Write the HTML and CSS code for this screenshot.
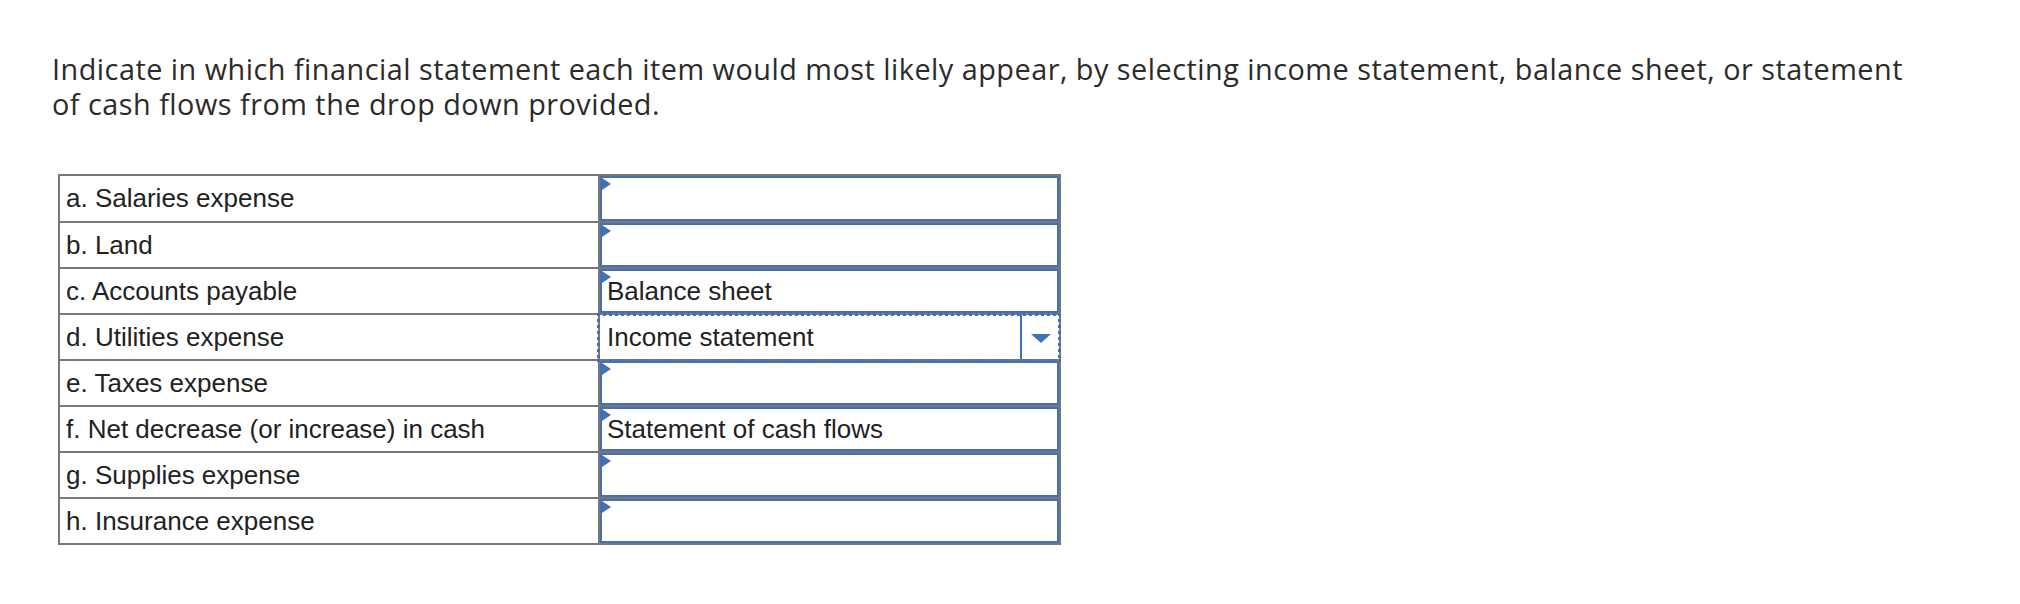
FILE: index.html
```html
<!DOCTYPE html>
<html>
<head>
  <title>Financial Statements</title>
  <link rel="stylesheet" href="styles.css">
</head>
<body>
  <div class="question">
    <p class="prompt">Indicate in which financial statement each item would most likely appear, by selecting income statement, balance sheet, or statement of cash flows from the drop down provided.</p>

    <div class="grid">
      <div class="item">a. Salaries expense</div>
      <div class="answer"><span class="marker"></span></div>

      <div class="item">b. Land</div>
      <div class="answer"><span class="marker"></span></div>

      <div class="item">c. Accounts payable</div>
      <div class="answer"><span class="marker"></span>Balance sheet</div>

      <div class="item">d. Utilities expense</div>
      <div class="answer answer-focus">
        <span class="value">Income statement</span>
        <span class="caret"><span class="caret-arrow"></span></span>
      </div>

      <div class="item">e. Taxes expense</div>
      <div class="answer"><span class="marker"></span></div>

      <div class="item">f. Net decrease (or increase) in cash</div>
      <div class="answer"><span class="marker"></span>Statement of cash flows</div>

      <div class="item">g. Supplies expense</div>
      <div class="answer"><span class="marker"></span></div>

      <div class="item">h. Insurance expense</div>
      <div class="answer"><span class="marker"></span></div>
    </div>
  </div>
</body>
</html>
```

FILE: styles.css
```css
    body {
      margin: 0;
      background: white;
      color: #222;
    }
    .question {
      padding: 51px 0 0 52px;
    }
    .prompt {
      font-family: 'Open Sans', Lato, sans-serif;
      font-size: 28.8px;
      letter-spacing: 0.5px;
      line-height: 35px;
      color: #2b2b2b;
      margin: 0 0 53px;
      width: 1880px;
    }
    .grid {
      display: grid;
      grid-template-columns: 538px 459px;
      grid-template-rows: 45px repeat(7, 44px);
      gap: 2px;
      padding: 2px;
      background: #787878;
      width: max-content;
      margin-left: 6px;
      font-family: 'Liberation Sans', Arial, sans-serif;
      font-size: 26px;
      color: #222;
    }
    .item {
      background: white;
      display: flex;
      align-items: center;
      padding-left: 6px;
    }
    .answer {
      position: relative;
      background: white;
      border: 2px solid #4670b5;
      box-sizing: border-box;
      display: flex;
      align-items: center;
      padding-left: 5px;
    }
    .marker {
      position: absolute;
      top: 0;
      left: 0;
      width: 0;
      height: 0;
      border-left: 9px solid #4670b5;
      border-top: 6.5px solid transparent;
      border-bottom: 6.5px solid transparent;
    }
    .answer-focus {
      border: none;
      padding: 0;
      z-index: 1;
      align-items: stretch;
    }
    .answer-focus::before {
      content: "";
      position: absolute;
      top: -2px;
      right: -2px;
      bottom: -3px;
      left: -3px;
      background:
        linear-gradient(90deg, #4670b5 50%, transparent 0) top left / 6px 3px repeat-x,
        linear-gradient(90deg, #4670b5 50%, transparent 0) bottom left / 6px 3px repeat-x,
        linear-gradient(180deg, #4670b5 50%, transparent 0) top left / 3px 6px repeat-y,
        linear-gradient(180deg, #4670b5 50%, transparent 0) top right / 3px 6px repeat-y;
      pointer-events: none;
    }
    .value {
      flex: 1;
      display: flex;
      align-items: center;
      padding-left: 7px;
    }
    .caret {
      width: 37px;
      border-left: 2px solid #4670b5;
      display: flex;
      align-items: center;
      justify-content: center;
    }
    .caret-arrow {
      width: 0;
      height: 0;
      border-top: 9px solid #4670b5;
      border-left: 10px solid transparent;
      border-right: 10px solid transparent;
      margin-top: 2px;
    }
```
